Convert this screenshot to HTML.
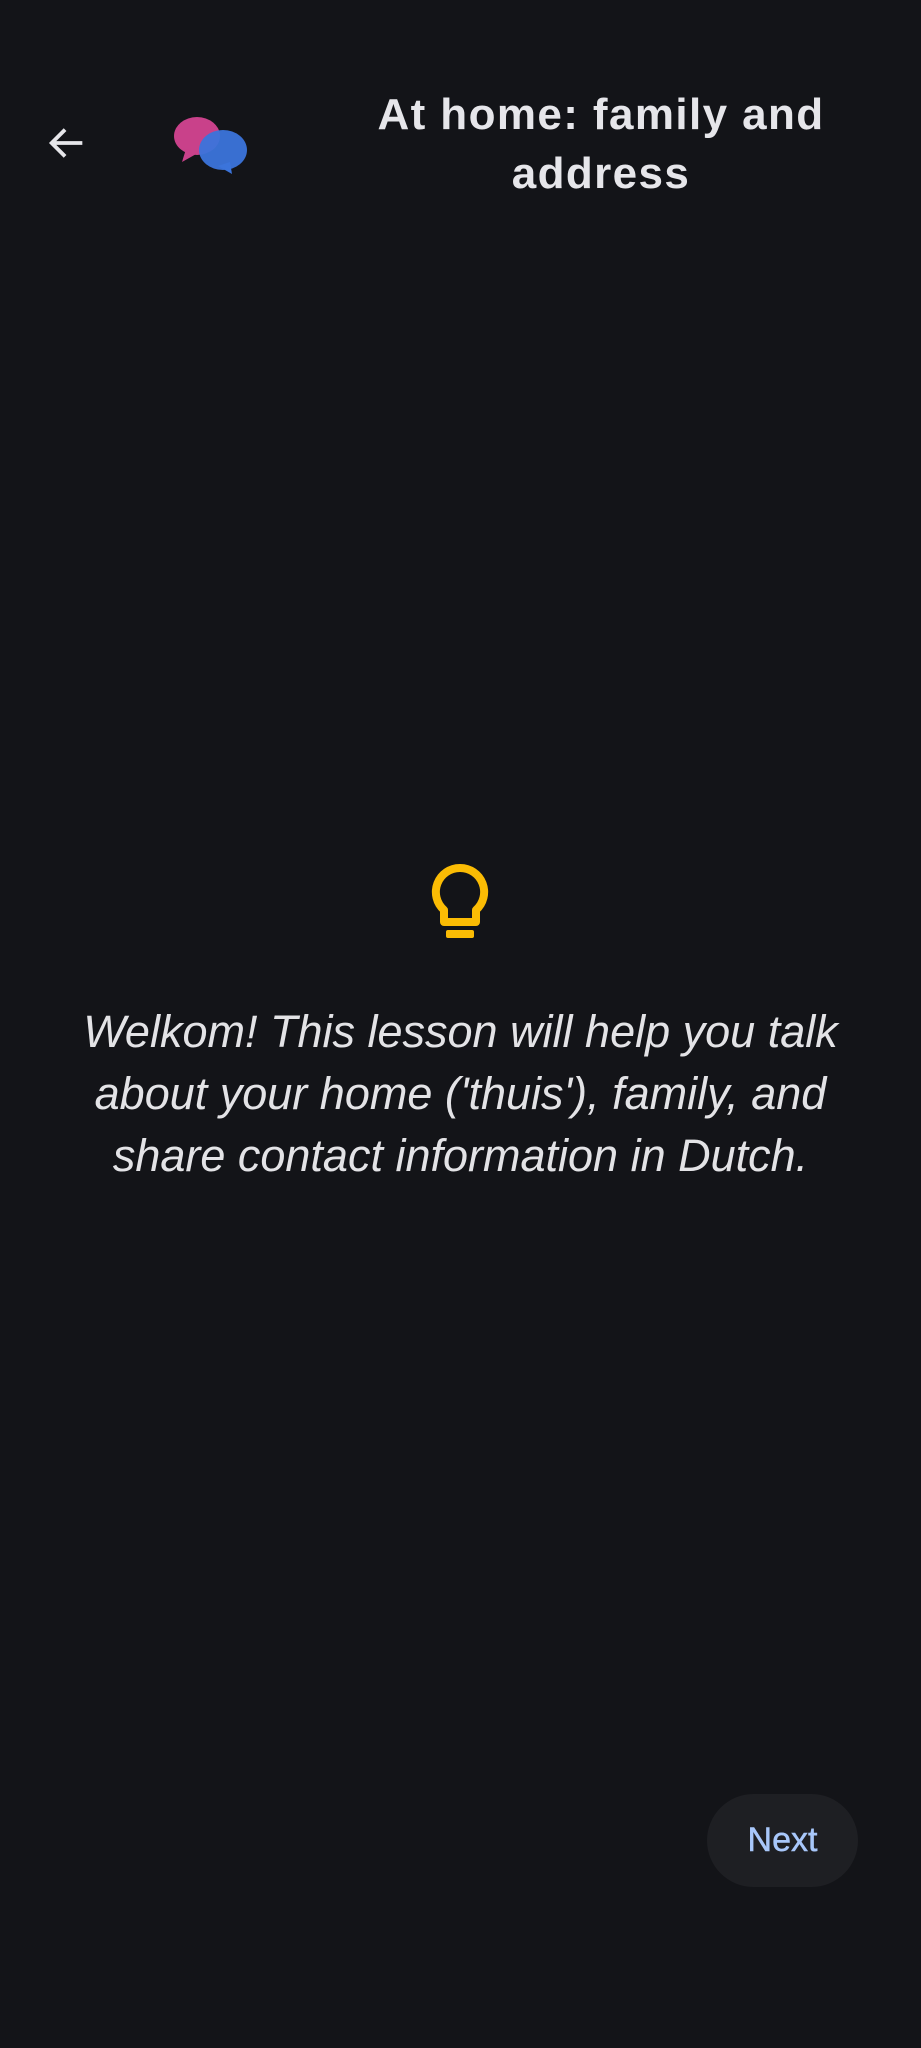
<!DOCTYPE html>
<html><head><meta charset="utf-8"><style>
html,body{margin:0;padding:0;background:#131418;width:921px;height:2048px;overflow:hidden;font-family:"Liberation Sans",sans-serif;}
.t{position:absolute;left:280px;width:642px;text-align:center;color:#e6e6ea;font-size:44px;line-height:59px;top:85px;font-weight:bold;letter-spacing:1.4px;}
.b{position:absolute;left:0px;width:921px;text-align:center;color:#e3e3e6;font-size:45px;line-height:62px;top:1001px;font-style:italic;}
.n{position:absolute;left:707px;top:1794px;width:151px;height:93px;border-radius:47px;background:#1e1f23;color:#a8c7fa;font-size:34px;line-height:93px;text-align:center;-webkit-text-stroke:0.5px #a8c7fa;}
</style></head><body>
<svg style="position:absolute;left:44px;top:120px" width="46" height="46" viewBox="0 0 24 24"><path d="M20 12H5M11 5l-7 7 7 7" fill="none" stroke="#e6e6ea" stroke-width="2"/></svg>
<svg style="position:absolute;left:172px;top:116px" width="80" height="60" viewBox="0 0 80 60">
<ellipse cx="25" cy="20" rx="23" ry="19" fill="#c9418a"/><path d="M14 33 L10 46 L26 37Z" fill="#c9418a"/>
<ellipse cx="51" cy="34" rx="24" ry="20" fill="#3b74db" opacity="0.95"/><path d="M46 50 L60 58 L58 46Z" fill="#3b74db"/>
</svg>
<div class="t">At home: family and<br>address</div>
<svg style="position:absolute;left:422px;top:862px" width="76" height="80" viewBox="0 0 76 80">
<path d="M38 6a24 24 0 0 0-16 42v12h32V48A24 24 0 0 0 38 6z" fill="none" stroke="#fbbc04" stroke-width="8" stroke-linejoin="round"/>
<rect x="24" y="68" width="28" height="8" rx="2" fill="#fbbc04"/>
</svg>
<div class="b">Welkom! This lesson will help you talk<br>about your home ('thuis'), family, and<br>share contact information in Dutch.</div>
<div class="n">Next</div>
</body></html>
